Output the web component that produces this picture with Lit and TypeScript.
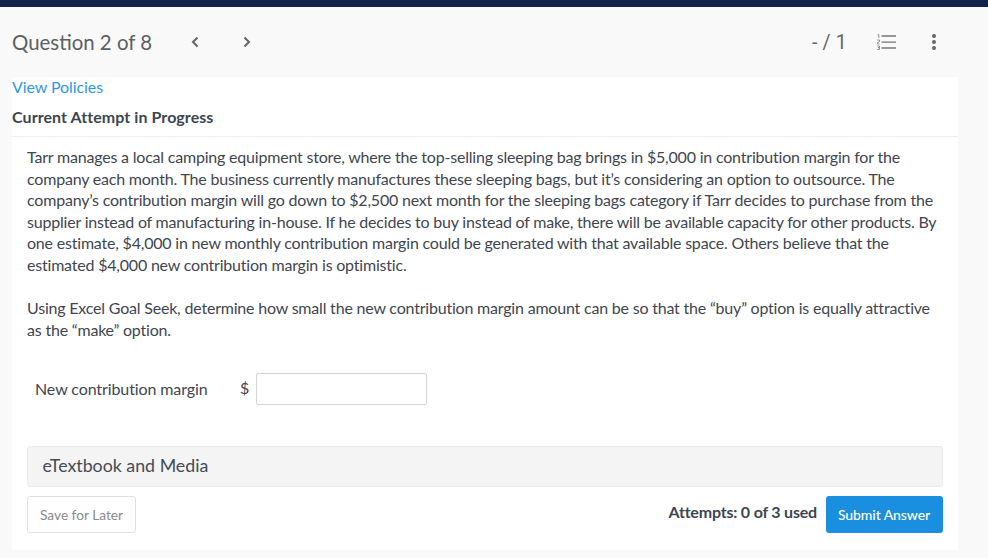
import { LitElement, html, css } from "lit";
import { customElement } from "lit/decorators.js";

@customElement("app-root")
export class AppRoot extends LitElement {
  static styles = css`
    :host { display: block; width: 988px; height: 558px; background: #f9f9f9; font-family: Lato, "Liberation Sans", sans-serif; color: #3f4650; overflow: hidden; }
    .topbar { height: 6.5px; background: #12214a; }
    .head { height: 70.5px; display: flex; align-items: center; padding: 1px 12px 0; box-sizing: border-box; color: #5c5f63; }
    .title { font-size: 20.4px; width: 178px; }
    .nav { display: flex; align-items: center; gap: 42px; }
    .nav svg { display: block; }
    .spacer { flex: 1; }
    .score { font-family: Roboto, sans-serif; font-size: 19.5px; letter-spacing: 0.2px; color: #666; margin-right: 30px; padding-top: 1px; }
    .list { margin-right: 35px; display: block; }
    .dots { margin-right: 39px; display: block; }
    .card { margin: 0 30px 0 12px; background: #fff; height: 473px; display: flex; flex-direction: column; }
    .link { color: #2f97e8; font-size: 16px; letter-spacing: -0.08px; line-height: 20px; }
    .attempt { font-weight: 700; font-size: 16px; letter-spacing: 0.07px; color: #3c4650; line-height: 22px; margin-top: 9px; padding-bottom: 8px; border-bottom: 1px solid #eee; }
    .body { padding: 9px 15px 0 15px; font-size: 16px; line-height: 21.6px; letter-spacing: -0.2px; color: #3f4650; }
    p { margin: 0; white-space: nowrap; }
    p + p { margin-top: 21.6px; }
    .answer { display: flex; align-items: center; margin: 33px 0 0 23px; font-size: 16px; letter-spacing: -0.1px; color: #3f4650; }
    .answer .lab { width: 205px; position: relative; bottom: 1px; }
    .answer .cur { width: 16px; position: relative; bottom: 2px; }
    .answer .inp { width: 171px; height: 32px; box-sizing: border-box; border: 1px solid #d4d4d4; border-radius: 2px; background: #fff; }
    .media { margin: 40.500px 15px 0 15px; height: 41px; box-sizing: border-box; background: #f4f4f4; border: 1px solid #ebebeb; border-radius: 3px; display: flex; align-items: center; padding: 0 0 2px 14.500px; font-size: 17.8px; color: #444b55; }
    .foot { margin: 9px 15px 0 15px; display: flex; align-items: center; }
    .save { width: 109px; height: 37px; box-sizing: border-box; border: 1px solid #e0e0e0; border-radius: 3px; display: flex; align-items: center; justify-content: center; font-size: 13.7px; color: #8a8a8a; background: #fff; }
    .used { font-weight: 700; font-size: 16px; letter-spacing: -0.2px; color: #3c4650; margin-right: 9px; position: relative; bottom: 2.500px; }
    .submit { width: 117px; height: 37px; border-radius: 3px; background: #1a8fe0; color: #fff; display: flex; align-items: center; justify-content: center; font-size: 14px; letter-spacing: -0.08px; font-weight: 500; padding-right: 1px; box-sizing: border-box; }
  `;

  render() {
    return html`
      <div class="topbar"></div>
      <div class="head">
        <div class="title">Question 2 of 8</div>
        <div class="nav">
          <svg width="10" height="14" viewBox="0 0 10 14"><path d="M7.5 2.5L3 7l4.5 4.5" fill="none" stroke="#666" stroke-width="2"/></svg>
          <svg width="10" height="14" viewBox="0 0 10 14"><path d="M2.5 2.5L7 7l-4.5 4.5" fill="none" stroke="#666" stroke-width="2"/></svg>
        </div>
        <div class="spacer"></div>
        <div class="score">- / 1</div>
        <svg class="list" width="19" height="16" viewBox="0 0 19 16">
          <path d="M4.500 2H19M4.500 8.200H19M4.500 14H19" stroke="#777" stroke-width="1.300"/>
          <path d="M0.500 1L1.800 0.500V4M0.300 6H2.500V7.500L0.300 9V10H2.500M0.300 12H2.500V13.500H1M2.500 13.500V15.500H0.300" fill="none" stroke="#777" stroke-width="0.800"/>
        </svg>
        <svg class="dots" width="6" height="18" viewBox="0 0 6 18">
          <circle cx="3" cy="3" r="2" fill="#666"/><circle cx="3" cy="9" r="2" fill="#666"/><circle cx="3" cy="15" r="2" fill="#666"/>
        </svg>
      </div>
      <div class="card">
        <div class="link">View Policies</div>
        <div class="attempt">Current Attempt in Progress</div>
        <div class="body">
          <p>Tarr manages a local camping equipment store, where the top-selling sleeping bag brings in $5,000 in contribution margin for the<br>company each month. The business currently manufactures these sleeping bags, but it’s considering an option to outsource. The<br>company’s contribution margin will go down to $2,500 next month for the sleeping bags category if Tarr decides to purchase from the<br>supplier instead of manufacturing in-house. If he decides to buy instead of make, there will be available capacity for other products. By<br>one estimate, $4,000 in new monthly contribution margin could be generated with that available space. Others believe that the<br>estimated $4,000 new contribution margin is optimistic.</p>
          <p>Using Excel Goal Seek, determine how small the new contribution margin amount can be so that the “buy” option is equally attractive<br>as the “make” option.</p>
        </div>
        <div class="answer">
          <div class="lab">New contribution margin</div>
          <div class="cur">$</div>
          <div class="inp"></div>
        </div>
        <div class="media">eTextbook and Media</div>
        <div class="foot">
          <div class="save">Save for Later</div>
          <div class="spacer"></div>
          <div class="used">Attempts: 0 of 3 used</div>
          <div class="submit">Submit Answer</div>
        </div>
      </div>
    `;
  }
}
